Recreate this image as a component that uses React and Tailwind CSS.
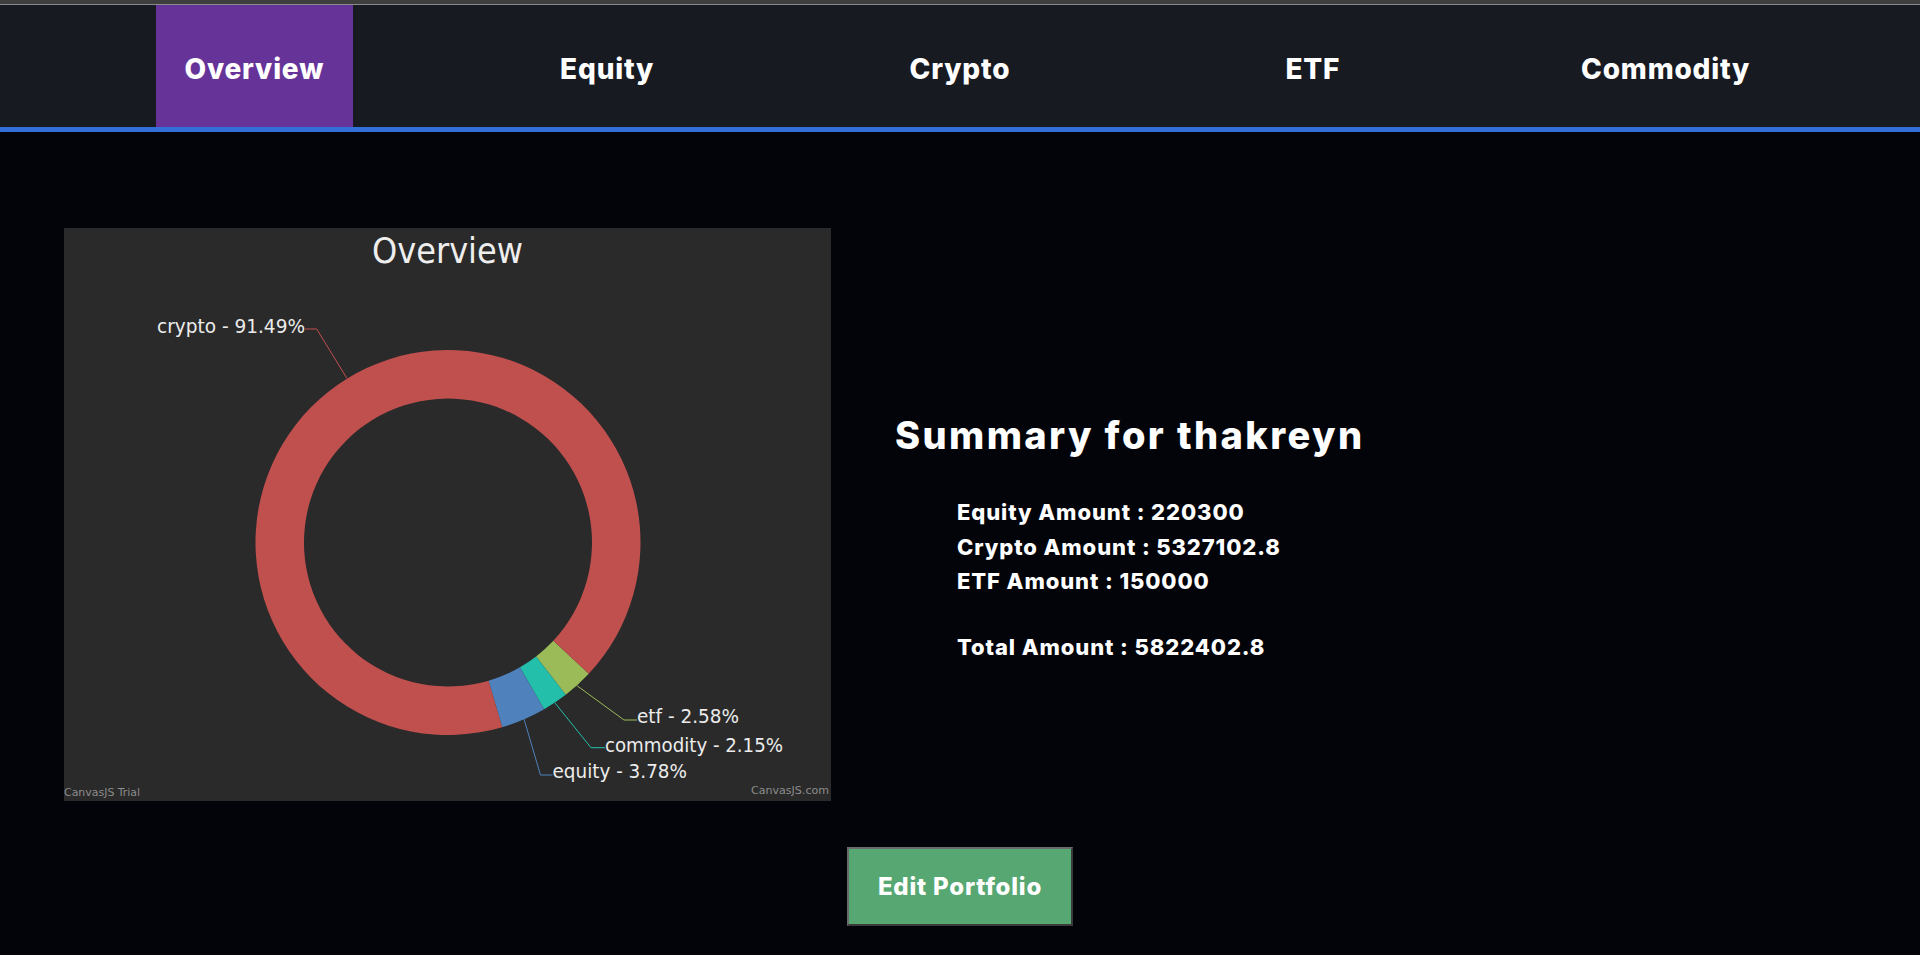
import React from 'react'

const TABS = ['Overview', 'Equity', 'Crypto', 'ETF', 'Commodity']

const CX = 384
const CY = 314.5
const R_OUT = 192.5
const R_IN = 144

// slices laid out clockwise from 3 o'clock, in degrees
const SLICES = [
  { name: 'etf', color: '#9bbb58', from: 43, to: 52.29 },
  { name: 'commodity', color: '#23bfaa', from: 52.29, to: 60.03 },
  { name: 'equity', color: '#4f81bc', from: 60.03, to: 73.64 },
  { name: 'crypto', color: '#c0504e', from: 73.64, to: 403 },
]

const LABELS = [
  { text: 'crypto - 91.49%', x: 93, y: 105, len: 148, color: '#c0504e', line: '241,101 252.7,101 282.7,150' },
  { text: 'etf - 2.58%', x: 573, y: 495, len: 102, color: '#9bbb58', line: '513,457.7 560,492 573,492' },
  { text: 'commodity - 2.15%', x: 541, y: 523.7, len: 178, color: '#23bfaa', line: '491,475 527,519.7 541,519.7' },
  { text: 'equity - 3.78%', x: 488.5, y: 550, len: 134.5, color: '#4f81bc', line: '460,491 476.5,547 488.5,547' },
]

const chartFont = '"DejaVu Sans Condensed", "DejaVu Sans", sans-serif'

function pt(r, deg) {
  const a = (deg * Math.PI) / 180
  return [CX + r * Math.cos(a), CY + r * Math.sin(a)]
}

function slicePath(from, to) {
  const large = to - from > 180 ? 1 : 0
  const [x1, y1] = pt(R_OUT, from)
  const [x2, y2] = pt(R_OUT, to)
  const [x3, y3] = pt(R_IN, to)
  const [x4, y4] = pt(R_IN, from)
  return `M${x1} ${y1} A${R_OUT} ${R_OUT} 0 ${large} 1 ${x2} ${y2} L${x3} ${y3} A${R_IN} ${R_IN} 0 ${large} 0 ${x4} ${y4} Z`
}

function DonutChart() {
  return (
    <div className="h-[573px] w-[767px] shrink-0 bg-[#2a2a2a]">
      <svg width="767" height="573" viewBox="0 0 767 573">
        <text x="383.5" y="35.3" textAnchor="middle" fill="#eeeeee" fontSize="36" fontFamily={chartFont} textLength="151" lengthAdjust="spacingAndGlyphs">
          Overview
        </text>
        {SLICES.map(s => (
          <path key={s.name} d={slicePath(s.from, s.to)} fill={s.color} />
        ))}
        {LABELS.map(l => (
          <g key={l.text}>
            <polyline points={l.line} fill="none" stroke={l.color} strokeWidth="1" />
            <text x={l.x} y={l.y} fill="#ececec" fontSize="20" fontFamily={chartFont} textLength={l.len} lengthAdjust="spacingAndGlyphs">
              {l.text}
            </text>
          </g>
        ))}
        <text x="0" y="568" fill="#8c8c8c" fontSize="11" fontFamily={chartFont} textLength="76" lengthAdjust="spacingAndGlyphs">
          CanvasJS Trial
        </text>
        <text x="765" y="566" textAnchor="end" fill="#8c8c8c" fontSize="11" fontFamily={chartFont} textLength="78" lengthAdjust="spacingAndGlyphs">
          CanvasJS.com
        </text>
      </svg>
    </div>
  )
}

function Summary() {
  return (
    <div className="ml-16 mt-[179px] text-white">
      <h2 className="text-[38px] font-extrabold tracking-[2.4px]">Summary for thakreyn</h2>
      <div className="ml-[62px] mt-[31px] text-[22px] font-extrabold leading-[34.5px] tracking-[0.9px]">
        <div>Equity Amount : 220300</div>
        <div>Crypto Amount : 5327102.8</div>
        <div>ETF Amount : 150000</div>
        <div className="mt-[31.5px]">Total Amount : 5822402.8</div>
      </div>
    </div>
  )
}

export default function App() {
  return (
    <div className="min-h-screen bg-[#02040a] font-['Inter',sans-serif]">
      <div className="h-[5px] border-b border-[#8a8a8a] bg-[#3e3e3e]" />
      <nav className="flex h-[127px] justify-evenly border-b-[5px] border-[#336fd8] bg-[#181a22]">
        {TABS.map((t, i) => (
          <div
            key={t}
            className={`flex w-[197px] items-center justify-center pt-[6px] text-[28px] font-extrabold tracking-[0.8px] text-white ${i === 0 ? 'bg-[#663399]' : ''}`}
          >
            {t}
          </div>
        ))}
      </nav>
      <main className="flex pl-16 pt-[96px]">
        <DonutChart />
        <Summary />
      </main>
      <div className="mt-[46px] flex justify-center">
        <button className="h-[79px] w-[226px] border-2 border-b-[#3a3a3a] border-l-[#6a6a6a] border-r-[#3a3a3a] border-t-[#6a6a6a] bg-[#57a773] text-[24px] font-extrabold tracking-[0.8px] text-white">
          Edit Portfolio
        </button>
      </div>
    </div>
  )
}
